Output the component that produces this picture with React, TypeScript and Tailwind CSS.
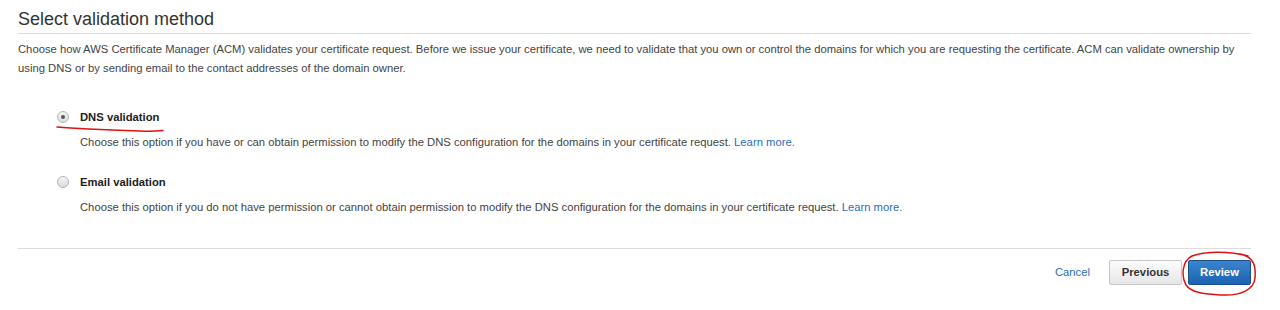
import React from "react";

function Radio({ checked }: { checked?: boolean }) {
  return (
    <span className="relative flex h-[12px] w-[12px] shrink-0 items-center justify-center rounded-full border border-[#b5b5b5] bg-gradient-to-b from-[#f4f4f4] to-[#dcdcdc]">
      {checked && <span className="h-[4px] w-[4px] rounded-full bg-[#555]" />}
    </span>
  );
}

function Option({
  checked,
  label,
  desc,
}: {
  checked?: boolean;
  label: string;
  desc: string;
}) {
  return (
    <div className="flex flex-col">
      <div className="flex items-center h-[18px]">
        <span className="w-[44px] pl-[39px]">
          <Radio checked={checked} />
        </span>
        <span className="ml-[18px] text-[11.25px] font-bold text-[#222]">{label}</span>
      </div>
      <p className="mt-[7px] pl-[62px] text-[11.25px] leading-[18px] text-[#444]">
        {desc} <a className="text-[#2b6cbf]">Learn more.</a>
      </p>
    </div>
  );
}

export default function App() {
  return (
    <div
      className="relative h-[310px] w-[1280px] overflow-hidden bg-white px-[18px]"
      style={{ fontFamily: '"Liberation Sans", Arial, sans-serif' }}
    >
      <h2 className="mt-[9px] border-b border-[#dcdcdc] pb-[4px] text-[18px] leading-[20px] text-[#333] w-[1233px]">
        Select validation method
      </h2>
      <p className="mt-[6px] text-[11.25px] leading-[19px] text-[#444] w-[1244px]">
        Choose how AWS Certificate Manager (ACM) validates your certificate request. Before we issue your certificate, we need to validate that you own or control the domains for which you are requesting the certificate. ACM can validate ownership by using DNS or by sending email to the contact addresses of the domain owner.
      </p>
      <div className="mt-[30px] flex flex-col gap-[22px]">
        <Option
          checked
          label="DNS validation"
          desc="Choose this option if you have or can obtain permission to modify the DNS configuration for the domains in your certificate request."
        />
        <Option
          label="Email validation"
          desc="Choose this option if you do not have permission or cannot obtain permission to modify the DNS configuration for the domains in your certificate request."
        />
      </div>
      <div className="mt-[32px] w-[1233px] border-t border-[#dcdcdc]" />
      <div className="mt-[11px] flex w-[1233px] items-center justify-end">
        <a className="mr-[19px] text-[11.25px] text-[#2b6cbf]">Cancel</a>
        <button className="h-[25px] w-[73px] rounded-[2px] border border-[#c8c8c8] bg-gradient-to-b from-[#fcfcfc] to-[#e6e6e6] text-[11.25px] font-bold text-[#333]">
          Previous
        </button>
        <button className="ml-[6px] h-[25px] w-[63px] rounded-[2px] border border-[#1a4f8f] bg-gradient-to-b from-[#3a85cf] to-[#1b62b0] text-[11.25px] font-bold text-white">
          Review
        </button>
      </div>
      <svg className="pointer-events-none absolute left-0 top-0" width="1280" height="310">
        <path
          d="M57 127 C 80 129, 110 130, 140 131 C 150 131.5, 158 131, 163 130.5"
          fill="none"
          stroke="#e01010"
          strokeWidth="1.5"
          strokeLinecap="round"
        />
        <path
          d="M1248 256 C 1230 251, 1205 251, 1192 256 C 1182 261, 1181 276, 1186 285 C 1192 294, 1210 294, 1222 295 C 1240 296, 1254 290, 1255 278 C 1256 266, 1254 257, 1240 254"
          fill="none"
          stroke="#e01010"
          strokeWidth="1.5"
          strokeLinecap="round"
        />
      </svg>
    </div>
  );
}
